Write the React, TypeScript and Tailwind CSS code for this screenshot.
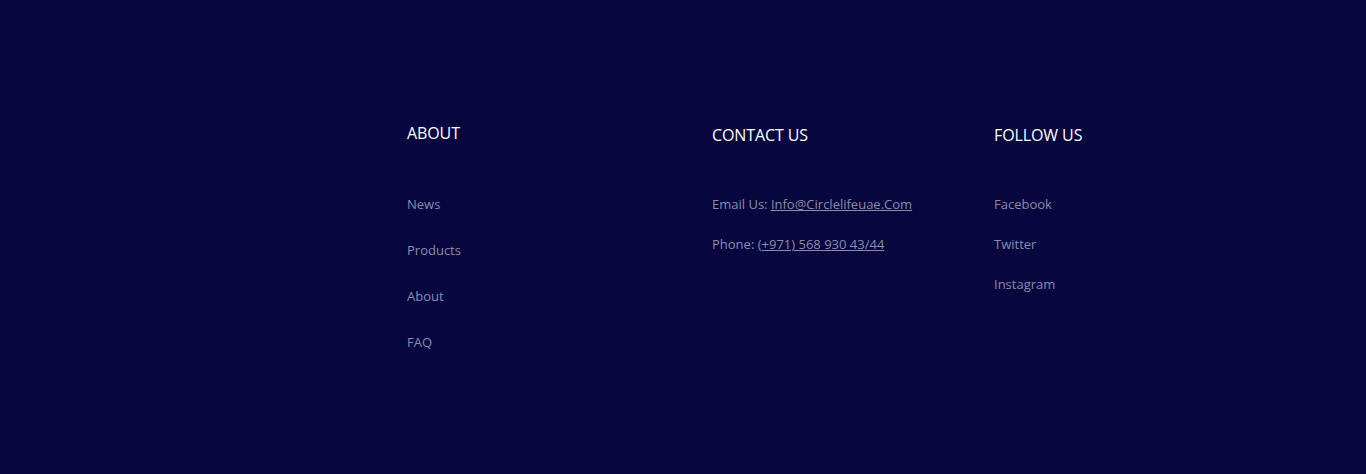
export default function App() {
  const about = ['News', 'Products', 'About', 'FAQ']
  const follow = ['Facebook', 'Twitter', 'Instagram']
  return (
    <footer
      className="w-full h-[474px] bg-[#07063f] text-[#8c8ca8]"
      style={{ fontFamily: '"Open Sans", "Noto Sans", sans-serif' }}
    >
      <div className="flex pl-[407px] pt-[122px]">
        <div className="w-[305px]">
          <h3 className="text-[16px] leading-[22px] text-white tracking-[-0.1px]">ABOUT</h3>
          <ul className="mt-[51px] flex flex-col gap-[28px] text-[13px] leading-[18px]">
            {about.map((item) => (
              <li key={item}>
                <a href="#">{item}</a>
              </li>
            ))}
          </ul>
        </div>
        <div className="w-[282px] pt-[2px]">
          <h3 className="text-[16px] leading-[22px] text-white tracking-[-0.1px]">CONTACT US</h3>
          <ul className="mt-[49px] flex flex-col gap-[22px] text-[13px] leading-[18px]">
            <li>
              Email Us: <a href="#" className="underline">Info@Circlelifeuae.Com</a>
            </li>
            <li>
              Phone: <a href="#" className="underline">(+971) 568 930 43/44</a>
            </li>
          </ul>
        </div>
        <div className="pt-[2px]">
          <h3 className="text-[16px] leading-[22px] text-white tracking-[-0.1px]">FOLLOW US</h3>
          <ul className="mt-[49px] flex flex-col gap-[22px] text-[13px] leading-[18px]">
            {follow.map((item) => (
              <li key={item}>
                <a href="#">{item}</a>
              </li>
            ))}
          </ul>
        </div>
      </div>
    </footer>
  )
}
